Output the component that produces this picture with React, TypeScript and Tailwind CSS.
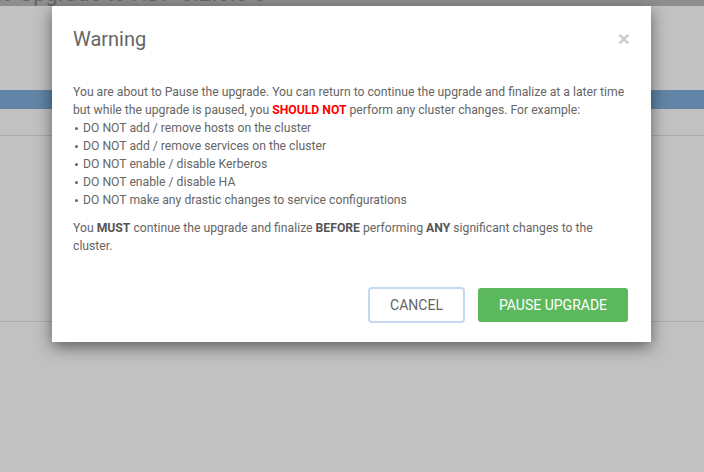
import React from "react";

const bullets = [
  "DO NOT add / remove hosts on the cluster",
  "DO NOT add / remove services on the cluster",
  "DO NOT enable / disable Kerberos",
  "DO NOT enable / disable HA",
  "DO NOT make any drastic changes to service configurations",
];

function PausePrompt() {
  return (
    <div className="absolute left-[52px] top-[6px] w-[599px] h-[336px] bg-white shadow-[0_5px_15px_rgba(0,0,0,0.5)] flex flex-col text-[#666]">
      {/* header */}
      <div className="flex items-center justify-between pl-[21px] pr-[21px] pt-[20px]">
        <h4 className="text-[20px] leading-[26px] text-[#666]">Warning</h4>
        <button className="text-[21px] leading-[26px] font-bold text-[#cccccc] font-['Liberation_Sans',Arial,sans-serif]">
          ×
        </button>
      </div>

      {/* body */}
      <div className="px-[21px] pt-[31px] text-[12.2px] leading-[18px]">
        <p>
          You are about to Pause the upgrade. You can return to continue the upgrade and finalize at a later time
          but while the upgrade is paused, you <span className="font-bold text-[#ff0000]">SHOULD NOT</span> perform
          any cluster changes. For example:
        </p>
        <ul>
          {bullets.map((b) => (
            <li key={b} className="flex items-center">
              <span className="ml-[2px] mr-[5px] w-[3px] h-[3px] rounded-full bg-[#666]" />
              <span>{b}</span>
            </li>
          ))}
        </ul>
        <p className="mt-[10px]">
          You <b className="text-[#555]">MUST</b> continue the upgrade and finalize{" "}
          <b className="text-[#555]">BEFORE</b> performing <b className="text-[#555]">ANY</b> significant changes to the
          cluster.
        </p>
      </div>

      {/* footer */}
      <div className="mt-auto flex items-center justify-end gap-[13px] pr-[23px] pb-[19px]">
        <button className="w-[97px] h-[36px] rounded-[4px] border-2 border-[#c4d8f4] bg-white text-[14px] text-[#666]">
          CANCEL
        </button>
        <button className="w-[150px] h-[34px] rounded-[3px] bg-[#5cb85c] text-[14px] text-white">
          PAUSE UPGRADE
        </button>
      </div>
    </div>
  );
}

export default function App() {
  return (
    <div className="relative w-[704px] h-[472px] overflow-hidden bg-[#c1c1c1] font-['Roboto','Liberation_Sans',sans-serif]">
      {/* page behind the backdrop */}
      <div className="h-[6px] overflow-hidden bg-[#8e8e8e]">
        <div className="-mt-[17px] -ml-[6px] text-[22px] leading-[22px] whitespace-nowrap text-[#666]">
          to Upgrade to HDP 3.2.6.0-0
        </div>
      </div>
      <div className="mt-[84px] h-[19px] bg-[#6284a6]" />
      <div className="mt-[26px] h-px bg-[#aaaaaa]" />
      <div className="mt-[185px] h-px bg-[#aaaaaa]" />

      <PausePrompt />
    </div>
  );
}
